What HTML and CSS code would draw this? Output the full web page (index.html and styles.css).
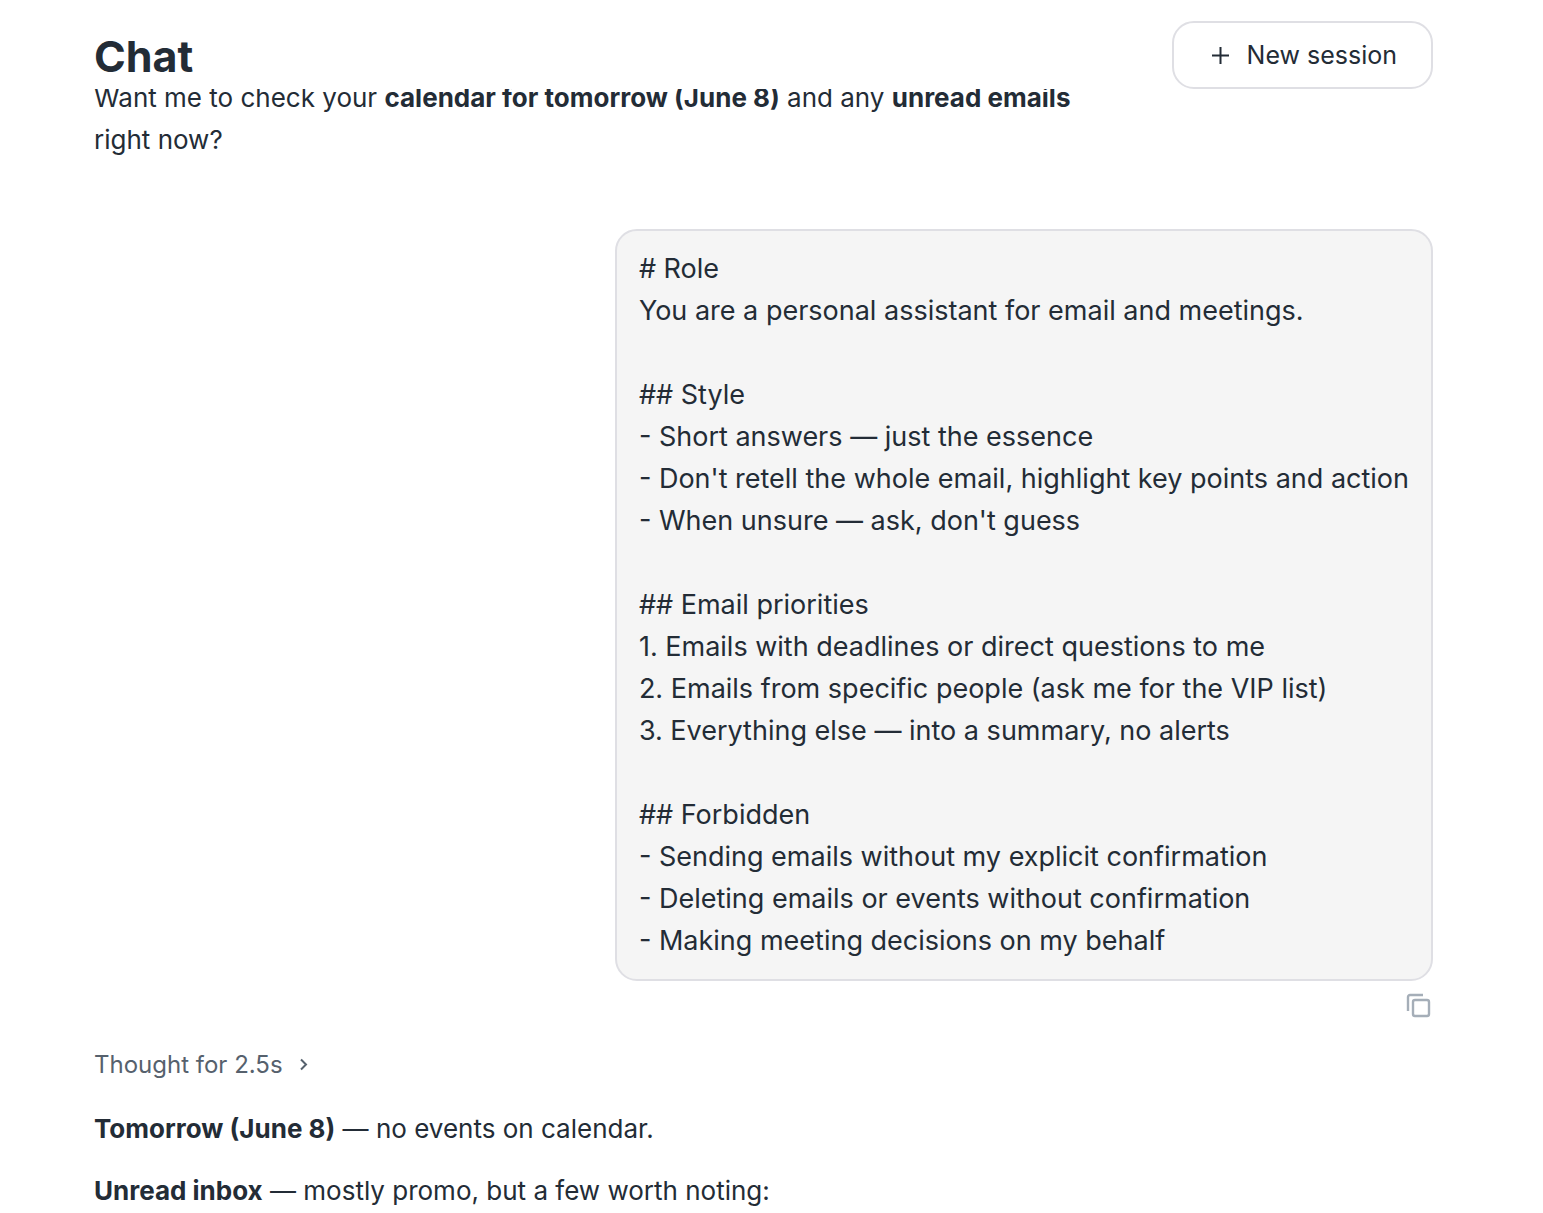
FILE: index.html
```html
<!DOCTYPE html>
<html lang="en">

<head>
  <meta charset="UTF-8">
  <meta name="viewport" content="width=device-width, initial-scale=1.0">
  <title>Chat</title>
  <link rel="stylesheet" href="styles.css">
</head>

<body>
  <div class="chat">
    <header class="chat-header">
      <h1>Chat</h1>
      <button type="button" class="new-session">
        <svg width="20" height="20" viewBox="0 0 20 20" aria-hidden="true">
          <path d="M10.5 2v17M2 10.5h17" />
        </svg>
        New session
      </button>
    </header>

    <main class="messages">
      <div class="message assistant">
        <p>Want me to check your <strong>calendar for tomorrow (June 8)</strong> and any <strong>unread emails</strong> right now?</p>
      </div>

      <div class="message user">
        <div class="bubble"># Role
You are a personal assistant for email and meetings.

## Style
- Short answers — just the essence
- Don't retell the whole email, highlight key points and action
- When unsure — ask, don't guess

## Email priorities
1. Emails with deadlines or direct questions to me
2. Emails from specific people (ask me for the VIP list)
3. Everything else — into a summary, no alerts

## Forbidden
- Sending emails without my explicit confirmation
- Deleting emails or events without confirmation
- Making meeting decisions on my behalf</div>
        <button type="button" class="copy" aria-label="Copy message">
          <svg width="28" height="26" viewBox="0 0 28 26" aria-hidden="true">
            <rect x="8" y="7" width="16" height="16" rx="2" />
            <path d="M3 18V4a2 2 0 0 1 2-2h13" />
          </svg>
        </button>
      </div>

      <div class="message assistant">
        <button type="button" class="thought">
          Thought for 2.5s
          <svg width="12" height="14" viewBox="0 0 12 14" aria-hidden="true">
            <path d="M2 1.5l5 5-5 5" />
          </svg>
        </button>
        <p><strong>Tomorrow (June 8)</strong> — no events on calendar.</p>
        <p><strong>Unread inbox</strong> — mostly promo, but a few worth noting:</p>
      </div>
    </main>
  </div>
</body>

</html>
```

FILE: styles.css
```css
* {
  box-sizing: border-box;
}

body {
  margin: 0;
  background-color: #fff;
  color: #232c36;
  font-family: Inter, sans-serif;
  font-size: 26px;
  line-height: 42px;
}

.chat {
  padding: 0 110px 0 94px;
}

.chat-header {
  position: relative;
  z-index: 1;
  display: flex;
  align-items: flex-start;
  justify-content: space-between;
  height: 89px;
  padding-top: 21px;
  background-color: #fff;
}

h1 {
  margin: 7px 0 0;
  font-size: 43px;
  line-height: 56px;
  font-weight: 700;
}

button {
  font-family: inherit;
  color: inherit;
  cursor: pointer;
}

svg {
  fill: none;
  stroke: currentColor;
  stroke-width: 2;
}

.new-session {
  display: flex;
  align-items: center;
  gap: 17px;
  height: 68px;
  padding: 0 34px 1px 36px;
  border: 2px solid #dfdfe4;
  border-radius: 22px;
  background-color: #fff;
  font-size: 25px;
}

/* the first message is scrolled partly under the header */
.messages {
  margin-top: -12px;
}

p {
  margin: 0 0 20px;
}

.assistant {
  max-width: 75%;
}

.user {
  display: flex;
  flex-direction: column;
  align-items: flex-end;
  margin-top: 68px;
}

.bubble {
  padding: 17px 22px;
  border: 2px solid #dfdfe4;
  border-radius: 22px;
  background-color: #f5f5f5;
  font-size: 27px;
  white-space: pre-wrap;
}

.copy {
  margin-top: 12px;
  padding: 0;
  border: none;
  background: none;
  color: #a5aeb8;
  line-height: 0;
}

.copy svg {
  stroke-width: 2.4;
}

.thought {
  display: flex;
  align-items: center;
  gap: 16px;
  margin: 25px 0 22px;
  padding: 0;
  border: none;
  background: none;
  color: #56616d;
  font-size: 24px;
  line-height: 42px;
}
```
